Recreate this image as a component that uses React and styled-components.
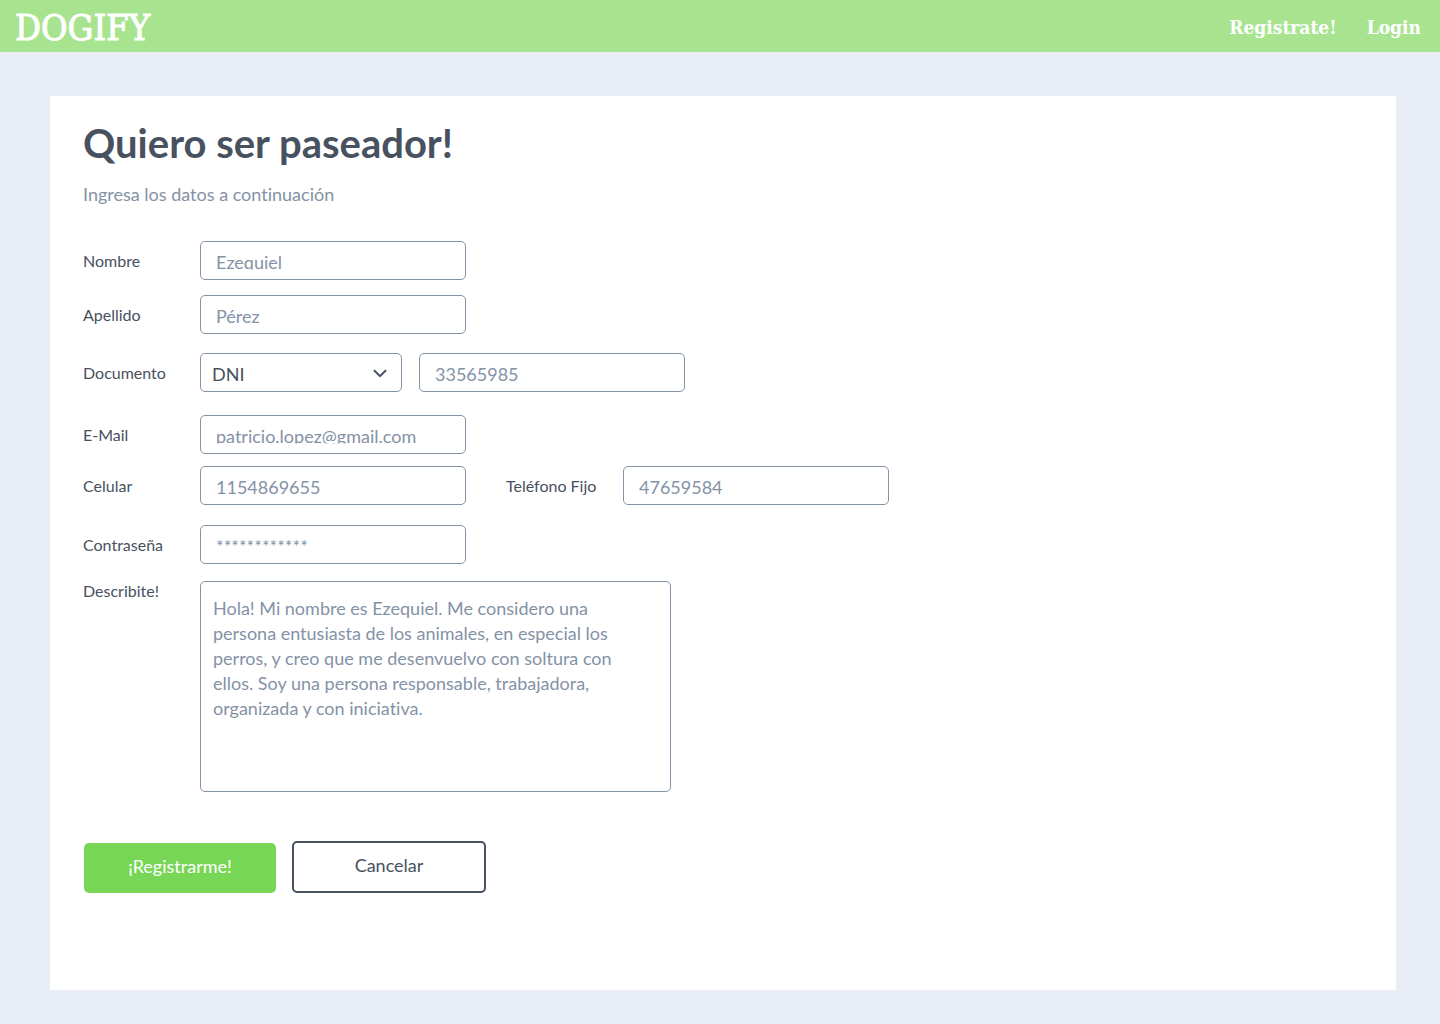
import React from "react";
import styled, { createGlobalStyle } from "styled-components";

const ink = "#475160";
const muted = "#8492a6";

const GlobalStyle = createGlobalStyle`
  *, *::before, *::after { box-sizing: border-box; }
  body {
    margin: 0;
    background: #e9edf5;
    color: ${ink};
    font-family: Lato, "Liberation Sans", sans-serif;
    font-variant-ligatures: none;
  }
`;

const Header = styled.header`
  display: flex;
  align-items: center;
  justify-content: space-between;
  height: 52px;
  padding: 2px 19px 0 15px;
  background: #a8e490;
  color: #fff;
`;

const Logo = styled.a`
  padding-top: 2px;
  color: inherit;
  font: 400 36px/48px "DejaVu Serif Condensed", "DejaVu Serif", serif;
  -webkit-text-stroke: 1px #fff;
  text-decoration: none;
`;

const Nav = styled.nav`
  display: flex;
  gap: 30px;
`;

const NavLink = styled.a`
  color: inherit;
  font: 700 19px/48px "DejaVu Serif Condensed", "DejaVu Serif", serif;
  text-decoration: none;
`;

const Card = styled.main`
  margin: 44px 44px 34px 50px;
  padding: 23px 33px 97px;
  background: #fff;
`;

const Title = styled.h1`
  margin: 0;
  font-size: 40px;
  line-height: 48px;
  font-weight: 700;
`;

const Subtitle = styled.p`
  margin: 15px 0 34px;
  color: ${muted};
  font-size: 18px;
  line-height: 25px;
`;

const Row = styled.div`
  display: flex;
  flex-wrap: wrap;
  align-items: ${(p) => (p.$top ? "flex-start" : "center")};
  margin-bottom: ${(p) => p.$space}px;
`;

const Field = styled.div`
  display: flex;
  align-items: inherit;
  margin-right: 40px;
`;

const Label = styled.label`
  flex: none;
  width: 117px;
  font-size: 16px;
  line-height: 20px;
`;

const Input = styled.input`
  width: 266px;
  height: 39px;
  padding: 11px 15px 9px;
  border: 1px solid ${muted};
  border-radius: 5px;
  background: #fff;
  color: ${ink};
  font: 400 18px/17px Lato, "Liberation Sans", sans-serif;
  &::placeholder {
    color: ${muted};
    opacity: 1;
    clip-path: inset(0 0 3px 0);
  }
`;

const SelectBox = styled.div`
  display: grid;
  align-items: center;
  width: 202px;
  margin-right: 17px;
  & > * { grid-area: 1 / 1; }
`;

const Select = styled.select`
  appearance: none;
  width: 100%;
  height: 39px;
  padding: 4px 32px 0 11px;
  border: 1px solid ${muted};
  border-radius: 5px;
  background: #fff;
  color: ${ink};
  font: 400 18px/25px Lato, "Liberation Sans", sans-serif;
`;

const Chevron = styled.svg`
  justify-self: end;
  width: 14px;
  height: 11px;
  margin-right: 15px;
  pointer-events: none;
`;

const TextArea = styled.textarea`
  display: block;
  width: 471px;
  height: 211px;
  padding: 14px 40px 14px 12px;
  border: 1px solid ${muted};
  border-radius: 5px;
  background: #fff;
  color: ${ink};
  font: 400 18px/25px Lato, "Liberation Sans", sans-serif;
  font-variant-ligatures: none;
  resize: none;
  &::placeholder { color: ${muted}; opacity: 1; }
`;

const Actions = styled.div`
  display: flex;
  align-items: flex-end;
  gap: 16px;
  margin-top: 49px;
  padding-left: 1px;
`;

const Button = styled.button`
  border-radius: 5px;
  padding: 0 0 4px;
  font: 400 18px/25px Lato, "Liberation Sans", sans-serif;
  cursor: pointer;
`;

const PrimaryButton = styled(Button)`
  width: 192px;
  height: 50px;
  border: 0;
  background: #78d657;
  color: #fff;
`;

const OutlineButton = styled(Button)`
  width: 194px;
  height: 52px;
  border: 2px solid ${ink};
  background: #fff;
  color: ${ink};
`;

function TextField({ id, label, type = "text", placeholder }) {
  return (
    <Field>
      <Label htmlFor={id}>{label}</Label>
      <Input id={id} type={type} placeholder={placeholder} />
    </Field>
  );
}

export default function App() {
  return (
    <>
      <GlobalStyle />
      <Header>
        <Logo href="#inicio">DOGIFY</Logo>
        <Nav>
          <NavLink href="#registro">Registrate!</NavLink>
          <NavLink href="#login">Login</NavLink>
        </Nav>
      </Header>
      <Card>
        <Title>Quiero ser paseador!</Title>
        <Subtitle>Ingresa los datos a continuación</Subtitle>
        <form onSubmit={(e) => e.preventDefault()}>
          <Row $space={15}>
            <TextField id="nombre" label="Nombre" placeholder="Ezequiel" />
          </Row>
          <Row $space={19}>
            <TextField id="apellido" label="Apellido" placeholder="Pérez" />
          </Row>
          <Row $space={23}>
            <Label htmlFor="tipo">Documento</Label>
            <SelectBox>
              <Select id="tipo" defaultValue="DNI">
                <option>DNI</option>
                <option>Pasaporte</option>
              </Select>
              <Chevron viewBox="0 0 14 11" fill="none" aria-hidden="true">
                <path d="M1 3.2 7 9.2 13 3.2" stroke={ink} strokeWidth="2" />
              </Chevron>
            </SelectBox>
            <Input aria-label="Número de documento" placeholder="33565985" />
          </Row>
          <Row $space={12}>
            <TextField id="email" label="E-Mail" type="email" placeholder="patricio.lopez@gmail.com" />
          </Row>
          <Row $space={20}>
            <TextField id="celular" label="Celular" type="tel" placeholder="1154869655" />
            <TextField id="fijo" label="Teléfono Fijo" type="tel" placeholder="47659584" />
          </Row>
          <Row $space={17}>
            <TextField id="clave" label="Contraseña" type="password" placeholder="************" />
          </Row>
          <Row $top $space={0}>
            <Label htmlFor="descripcion">Describite!</Label>
            <TextArea
              id="descripcion"
              placeholder="Hola! Mi nombre es Ezequiel. Me considero una persona entusiasta de los animales, en especial los perros, y creo que me desenvuelvo con soltura con ellos. Soy una persona responsable, trabajadora, organizada y con iniciativa."
            />
          </Row>
          <Actions>
            <PrimaryButton type="submit">¡Registrarme!</PrimaryButton>
            <OutlineButton type="button">Cancelar</OutlineButton>
          </Actions>
        </form>
      </Card>
    </>
  );
}
